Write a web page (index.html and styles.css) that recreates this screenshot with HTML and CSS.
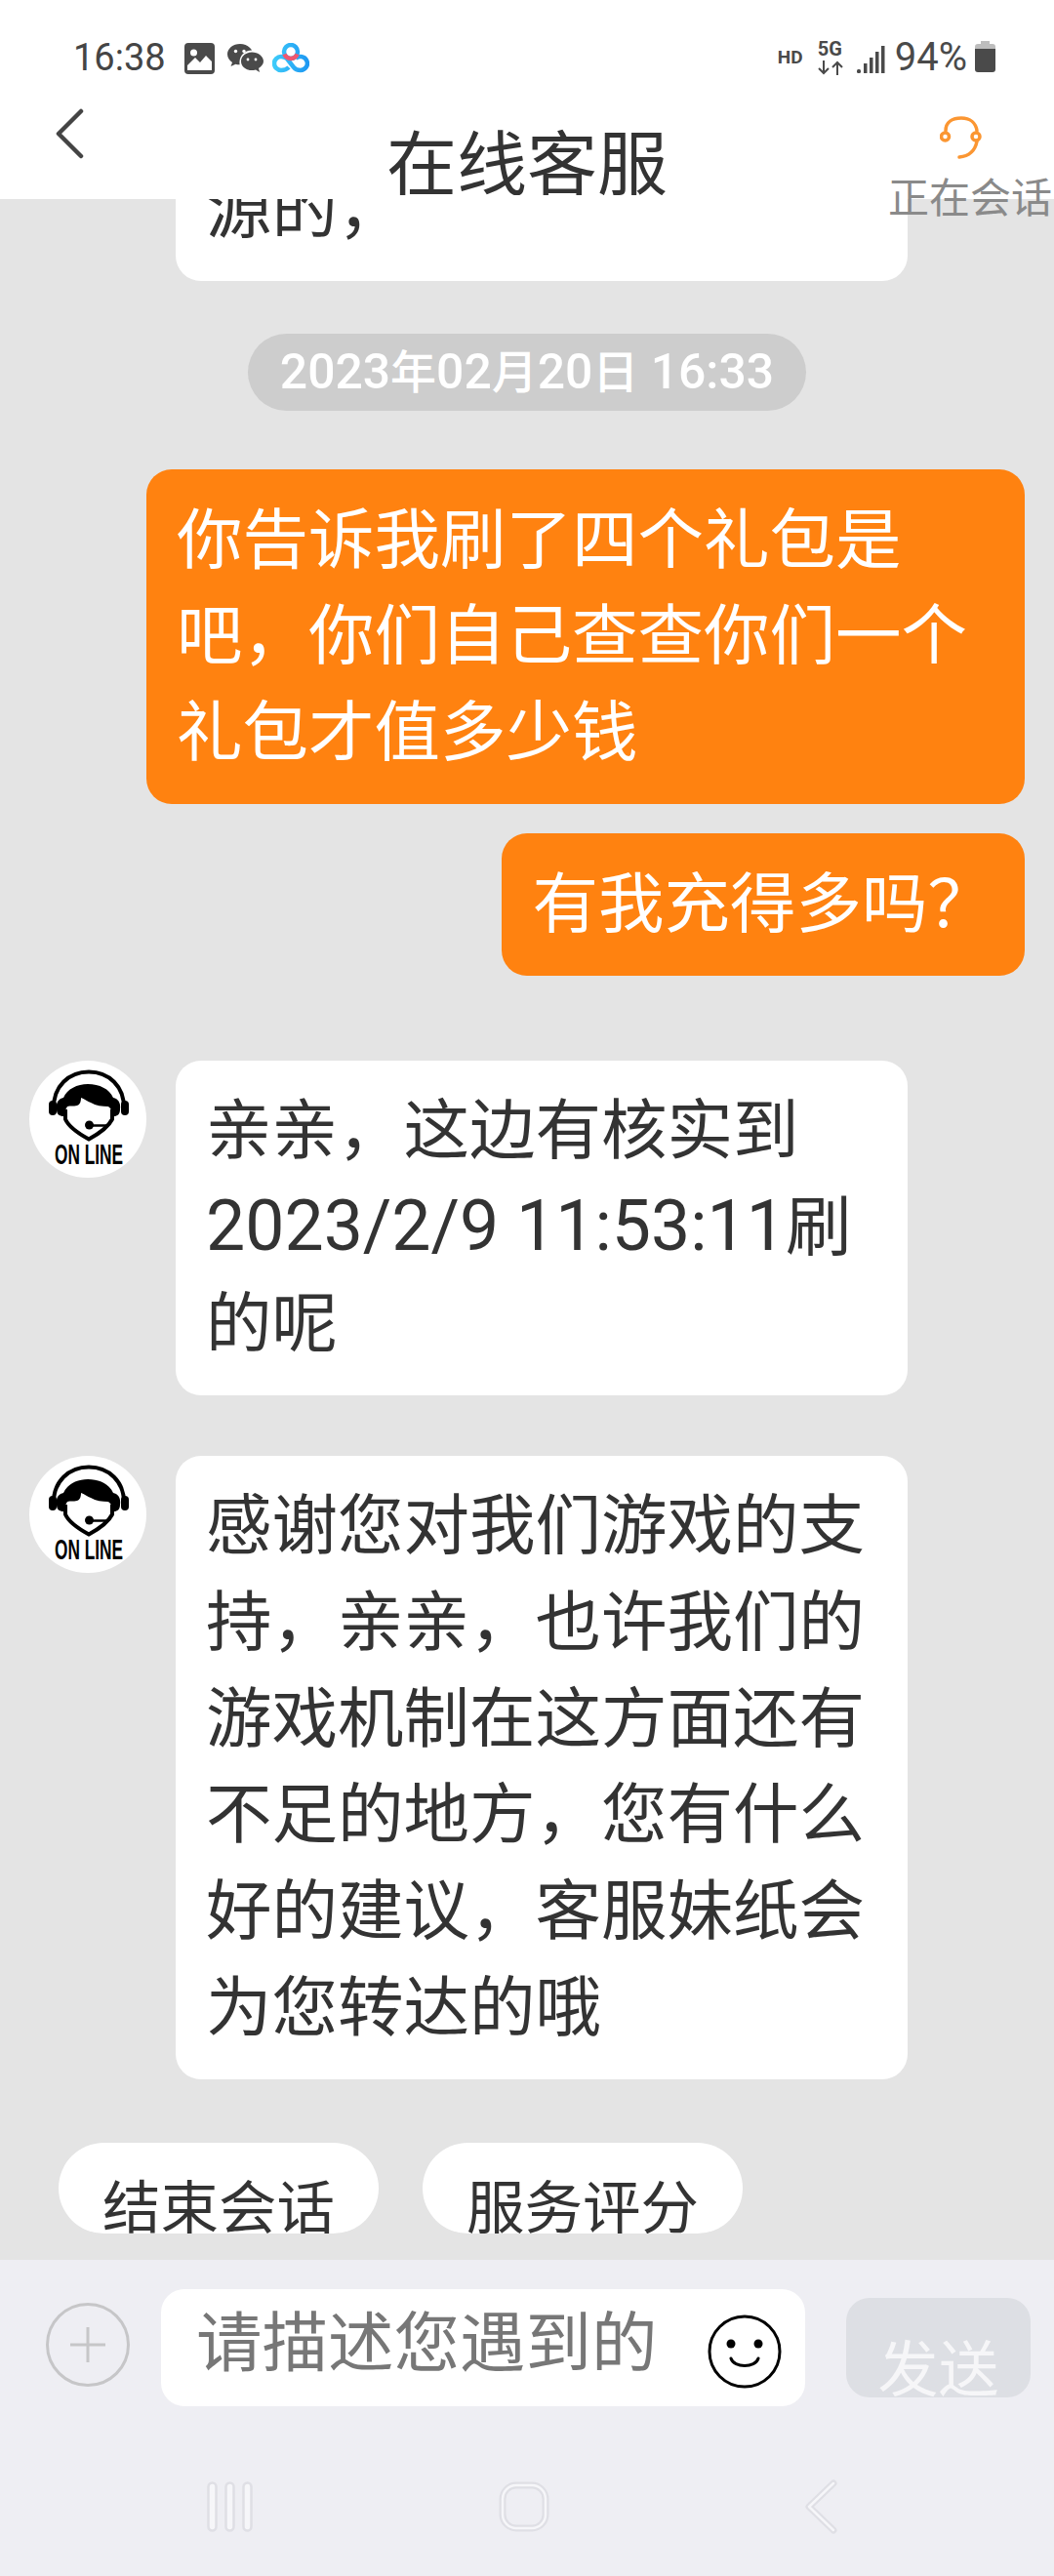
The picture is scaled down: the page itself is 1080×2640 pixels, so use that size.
FILE: index.html
```html
<!DOCTYPE html>
<html lang="zh">
<head>
<meta charset="utf-8">
<title>在线客服</title>
<link rel="stylesheet" href="styles.css">
</head>
<body>
<svg class="defs" width="0" height="0">
  <symbol id="agent" viewBox="0 0 120 120">
    <circle cx="60" cy="60" r="60" fill="#fff"/>
    <path d="M25 50C24 26 41 11.500 61 11.500S98 26 97 50" fill="none" stroke="#000" stroke-width="4"/>
    <rect x="20" y="41" width="8" height="15" rx="4" fill="#000"/>
    <rect x="94" y="41" width="8" height="15" rx="4" fill="#000"/>
    <path d="M28 50C27 43 30 39 35 38C39 29 49 24 60 24C72 24 82 29 86 38C91 39 94 43 93 50C93 55 90 57 87 57C85 52 84 49 81 47C75 47 68 46 63 43C60 42 56 39 53 38C53 42 52 45 49 46C45 47 42 46 39 47C37 50 36 53 35 57C31 57 28 55 28 50Z" fill="#000"/>
    <path d="M37 50V60C40 67 51 75 61 80.500C71 75 81 68 85 60V50" fill="none" stroke="#000" stroke-width="4"/>
    <circle cx="61.500" cy="66" r="4.500" fill="#000"/>
    <path d="M62 66.500H79" stroke="#000" stroke-width="2.500"/>
    <text x="26" y="106" textLength="70" lengthAdjust="spacingAndGlyphs" class="agent-text">ON LINE</text>
  </symbol>
</svg>
<div class="screen">
  <header class="header">
    <div class="status">
      <div class="status-left">
        <span class="clock">16:38</span>
        <svg class="s-img" viewBox="0 0 31 32"><rect width="31" height="32" rx="4" fill="#4a4a4a"/><circle cx="9.500" cy="10" r="3.500" fill="#fff"/><path d="M3 28V23L11 15L16 20L22 13L28 19V28Z" fill="#fff"/></svg>
        <svg class="s-wx" viewBox="0 0 37 32"><path d="M13 1C5.800 1 0 5.800 0 11.600C0 15 2 18 5 20L3.500 24L8.500 21.700C10 22.100 11 22.300 13 22.200C20 22 26 17.200 26 11.600C26 5.800 20 1 13 1Z" fill="#4a4a4a"/><circle cx="25" cy="20" r="12.600" fill="#fff"/><path d="M25 9.500C18.500 9.500 14 13.800 14 18.800C14 23.800 18.500 28 25 28C26.500 28 27.500 27.800 29 27.400L33 30L32 26C34.800 24.200 37 21.800 37 18.800C37 13.800 31.500 9.500 25 9.500Z" fill="#4a4a4a"/><circle cx="8.500" cy="8.500" r="1.700" fill="#fff"/><circle cx="17" cy="8.500" r="1.700" fill="#fff"/><circle cx="21" cy="17" r="1.400" fill="#fff"/><circle cx="29" cy="17" r="1.400" fill="#fff"/></svg>
        <svg class="s-cloud" viewBox="0 0 38 32"><defs><linearGradient id="bc" gradientUnits="userSpaceOnUse" x1="0" x2="38" y1="0" y2="0"><stop offset="0" stop-color="#3fcdfa"/><stop offset="1" stop-color="#1c96f2"/></linearGradient></defs><g fill="none" stroke="url(#bc)" stroke-width="4.500"><circle cx="19" cy="9" r="7"/><path d="M15 16C13 14.500 11 14 9 14A7 7 0 1 0 9 28C12 28 15 27 17 25"/><path d="M15 16L22 25C24 28 26 28 29 28A7 7 0 1 0 24 16"/></g><path d="M12.500 11.500A7 7 0 0 0 25.500 11.500" fill="none" stroke="#f0566f" stroke-width="4.500"/></svg>
      </div>
      <div class="status-right">
        <span class="hd">HD</span>
        <span class="net"><span class="net-g">5G</span><svg class="net-arrows" viewBox="0 0 26 15"><path d="M6 0V13M1 8L6 13L11 8M20 15V2M15 7L20 2L25 7" fill="none" stroke="#4a4a4a" stroke-width="2"/></svg></span>
        <svg class="s-signal" viewBox="0 0 29 30"><g fill="#4a4a4a"><rect x="0" y="25" width="4" height="4" rx="1.500"/><rect x="7" y="19" width="3.500" height="10"/><rect x="13" y="13" width="3.500" height="16"/><rect x="19" y="7" width="3.500" height="22"/><rect x="25" y="1" width="3.500" height="28"/></g></svg>
        <span class="pct">94%</span>
        <svg class="s-batt" viewBox="0 0 21 32"><path d="M6 0H15V3H18Q21 3 21 6V8H0V6Q0 3 3 3H6Z" fill="#bdbdbd"/><path d="M0 8H21V29Q21 32 18 32H3Q0 32 0 29Z" fill="#4a4a4a"/></svg>
      </div>
    </div>
    <div class="nav">
      <svg class="back" viewBox="0 0 30 52"><path d="M27 3L4 26L27 49" fill="none" stroke="#444" stroke-width="4.500" stroke-linecap="round" stroke-linejoin="round"/></svg>
      <div class="title">在线客服</div>
      <div class="state">
        <svg class="headset" viewBox="0 0 44 44"><g fill="none" stroke="#fb9632" stroke-width="3.500" stroke-linecap="round"><path d="M6 15C6 6 13 2 22 2S37 7 38 15"/><circle cx="5.500" cy="21" r="4"/><circle cx="37" cy="21" r="4"/><path d="M38 26C36 36 30 41 20 42"/></g></svg>
        <span class="state-text">正在会话</span>
      </div>
    </div>
  </header>

  <main class="chat">
    <div class="row row-first"><div class="bubble bubble-in">源的，</div></div>
    <div class="date"><span class="num">2023</span>年<span class="num">02</span>月<span class="num">20</span>日<span class="num"> 16:33</span></div>
    <div class="row row-out row-out-a"><div class="bubble bubble-out bubble-wide">你告诉我刷了四个礼包是吧，你们自己查查你们一个礼包才值多少钱</div></div>
    <div class="row row-out row-out-b"><div class="bubble bubble-out">有我充得多吗？</div></div>
    <div class="row row-in row-in-a">
      <svg class="avatar"><use href="#agent"/></svg>
      <div class="bubble bubble-in">亲亲，这边有核实到<span class="num">2023/2/9 11:53:11</span>刷的呢</div>
    </div>
    <div class="row row-in row-in-b">
      <svg class="avatar"><use href="#agent"/></svg>
      <div class="bubble bubble-in">感谢您对我们游戏的支持，亲亲，也许我们的游戏机制在这方面还有不足的地方，您有什么好的建议，客服妹纸会为您转达的哦</div>
    </div>
    <div class="actions">
      <div class="pill">结束会话</div>
      <div class="pill">服务评分</div>
    </div>
  </main>

  <footer class="footer">
    <div class="composer">
      <svg class="plus" viewBox="0 0 86 86"><circle cx="43" cy="43" r="41.500" fill="none" stroke="#c6c6c8" stroke-width="3"/><path d="M25 43H61M43 25V61" stroke="#c6c6c8" stroke-width="3"/></svg>
      <div class="input">
        <span class="placeholder">请描述您遇到的</span>
        <svg class="smile" viewBox="0 0 76 76"><circle cx="38" cy="38" r="36" fill="none" stroke="#000" stroke-width="3"/><circle cx="24" cy="30" r="4.500" fill="#000"/><circle cx="52" cy="30" r="4.500" fill="#000"/><path d="M24 45C27 55 49 55 52 45" fill="none" stroke="#000" stroke-width="3" stroke-linecap="round"/></svg>
      </div>
      <div class="send">发送</div>
    </div>
    <div class="sysnav">
      <svg class="sys-recent" viewBox="0 0 47 52"><g fill="#f6f6f9" stroke="#dfdfe5" stroke-width="2.500"><rect x="1.500" y="1.500" width="8" height="49" rx="4"/><rect x="19.500" y="1.500" width="8" height="49" rx="4"/><rect x="37.500" y="1.500" width="8" height="49" rx="4"/></g></svg>
      <svg class="sys-home" viewBox="0 0 52 52"><rect x="4" y="4" width="44" height="44" rx="14" fill="none" stroke="#dfdfe5" stroke-width="7"/><rect x="4" y="4" width="44" height="44" rx="14" fill="none" stroke="#f6f6f9" stroke-width="2.500"/></svg>
      <svg class="sys-back" viewBox="0 0 34 56"><path d="M30 4L5 28L30 52" fill="none" stroke="#dfdfe5" stroke-width="7" stroke-linecap="round" stroke-linejoin="round"/><path d="M30 4L5 28L30 52" fill="none" stroke="#f6f6f9" stroke-width="2.500" stroke-linecap="round" stroke-linejoin="round"/></svg>
    </div>
  </footer>
</div>
</body>
</html>
```
FILE: styles.css
```css
* { box-sizing: border-box; }
html, body { margin: 0; padding: 0; }
body {
  width: 1080px;
  height: 2640px;
  overflow: hidden;
  font-family: Roboto, "Noto Sans CJK SC", sans-serif;
  color: #333;
}
.defs { position: absolute; }
.agent-text {
  font-family: "Liberation Sans Narrow", "Liberation Sans", sans-serif;
  font-weight: 700;
  font-size: 29px;
  fill: #000;
}
.num { font-size: 1.06em; line-height: 0; }
.screen {
  width: 1080px;
  height: 2640px;
  display: flex;
  flex-direction: column;
  background: #e4e4e4;
}

/* header */
.header {
  position: relative;
  z-index: 2;
  flex: 0 0 204px;
  background: #fff;
}
.status {
  height: 90px;
  padding: 42px 60px 0 75px;
  display: flex;
  justify-content: space-between;
  align-items: flex-start;
}
.status-left, .status-right { display: flex; align-items: flex-start; }
.clock {
  font-size: 38px;
  line-height: 32px;
  color: #454545;
  width: 114px;
  margin-top: 1px;
}
.s-img { width: 31px; height: 32px; margin-top: 2px; margin-right: 13px; }
.s-wx { width: 37px; height: 32px; margin-top: 2px; margin-right: 9px; }
.s-cloud { width: 38px; height: 32px; margin-top: 2px; }
.hd {
  font-size: 19px;
  font-weight: 700;
  line-height: 18px;
  margin-top: 8px;
  width: 26px;
  margin-right: 15px;
  color: #4a4a4a;
  white-space: nowrap;
}
.net { width: 26px; margin-right: 14px; display: flex; flex-direction: column; }
.net-g { font-size: 20px; font-weight: 700; line-height: 17px; color: #4a4a4a; white-space: nowrap; }
.net-arrows { width: 26px; height: 15px; margin-top: 3px; }
.s-signal { width: 29px; height: 30px; margin-top: 4px; margin-right: 10px; }
.pct { font-size: 40px; line-height: 32px; color: #4a4a4a; margin-right: 8px; margin-top: 1px; }
.s-batt { width: 21px; height: 32px; }

.nav {
  height: 114px;
  display: grid;
  grid-template-columns: 1fr auto 1fr;
}
.back { width: 30px; height: 52px; margin: 21px 0 0 56px; }
.title {
  font-size: 72px;
  line-height: 160px;
  height: 110px;
  overflow: hidden;
  color: #333;
}
.state {
  height: 114px;
  display: flex;
  flex-direction: column;
  align-items: flex-end;
}
.headset { width: 44px; height: 44px; margin: 29px 73px 0 0; flex: none; }
.state-text {
  font-size: 42px;
  line-height: 48px;
  margin: 17px 2px 0 0;
  color: #8a8a8a;
  white-space: nowrap;
  flex: none;
}

/* chat */
.chat {
  flex: 1 1 auto;
  min-height: 0;
  overflow: hidden;
  display: flex;
  flex-direction: column;
  justify-content: flex-end;
  padding-bottom: 27px;
}
.row { display: flex; align-items: flex-start; flex: none; }
.row-first { padding-left: 180px; }
.row-out { justify-content: flex-end; padding-right: 30px; }
.row-in { padding-left: 30px; gap: 30px; }
.row-out-a { margin-top: 60px; }
.row-out-b { margin-top: 30px; }
.row-in-a { margin-top: 87px; }
.row-in-b { margin-top: 62px; }
.avatar { width: 120px; height: 120px; flex: none; }
.bubble {
  font-size: 67.5px;
  line-height: 98.67px;
  padding: 23.5px 32px 23.5px 31px;
  border-radius: 26px;
}
.bubble-in { width: 750px; background: #fff; color: #333; }
.bubble-out { background: #ff8210; color: #fff; }
.bubble-wide { width: 900px; }
.date {
  flex: none;
  align-self: center;
  margin-top: 54px;
  width: 572px;
  height: 79px;
  border-radius: 40px;
  background: #cdcdcd;
  color: #fff;
  font-size: 47px;
  font-weight: 500;
  line-height: 79px;
  text-align: center;
  white-space: pre;
}
.actions { display: flex; gap: 45px; padding-left: 60px; margin-top: 65px; flex: none; }
.pill {
  width: 328px;
  height: 93px;
  overflow: hidden;
  border-radius: 47px;
  background: #fff;
  font-size: 59.5px;
  line-height: 136px;
  text-align: center;
  color: #333;
}

/* footer */
.footer {
  flex: 0 0 324px;
  background: #eeeef3;
}
.composer { display: flex; align-items: flex-start; padding: 30px 0 0 47px; height: 150px; }
.plus { width: 86px; height: 86px; margin: 14px 32px 0 0; flex: none; }
.input {
  width: 660px;
  height: 120px;
  border-radius: 24px;
  background: #fff;
  display: flex;
  justify-content: space-between;
  padding: 0 24px 0 36px;
  flex: none;
}
.placeholder { font-size: 67.5px; line-height: 112px; color: #777; white-space: nowrap; }
.smile { width: 76px; height: 76px; margin-top: 26px; flex: none; }
.send {
  width: 189px;
  height: 102px;
  margin: 9px 0 0 42px;
  overflow: hidden;
  border-radius: 24px;
  background: #dddfe4;
  color: #f6f6f8;
  font-size: 62px;
  line-height: 150px;
  text-align: center;
  flex: none;
}
.sysnav { display: flex; align-items: flex-start; padding: 77px 0 0 212px; }
.sys-recent { width: 47px; height: 52px; margin-right: 252px; }
.sys-home { width: 52px; height: 52px; margin-right: 261px; }
.sys-back { width: 34px; height: 56px; margin-top: -2px; }
```
